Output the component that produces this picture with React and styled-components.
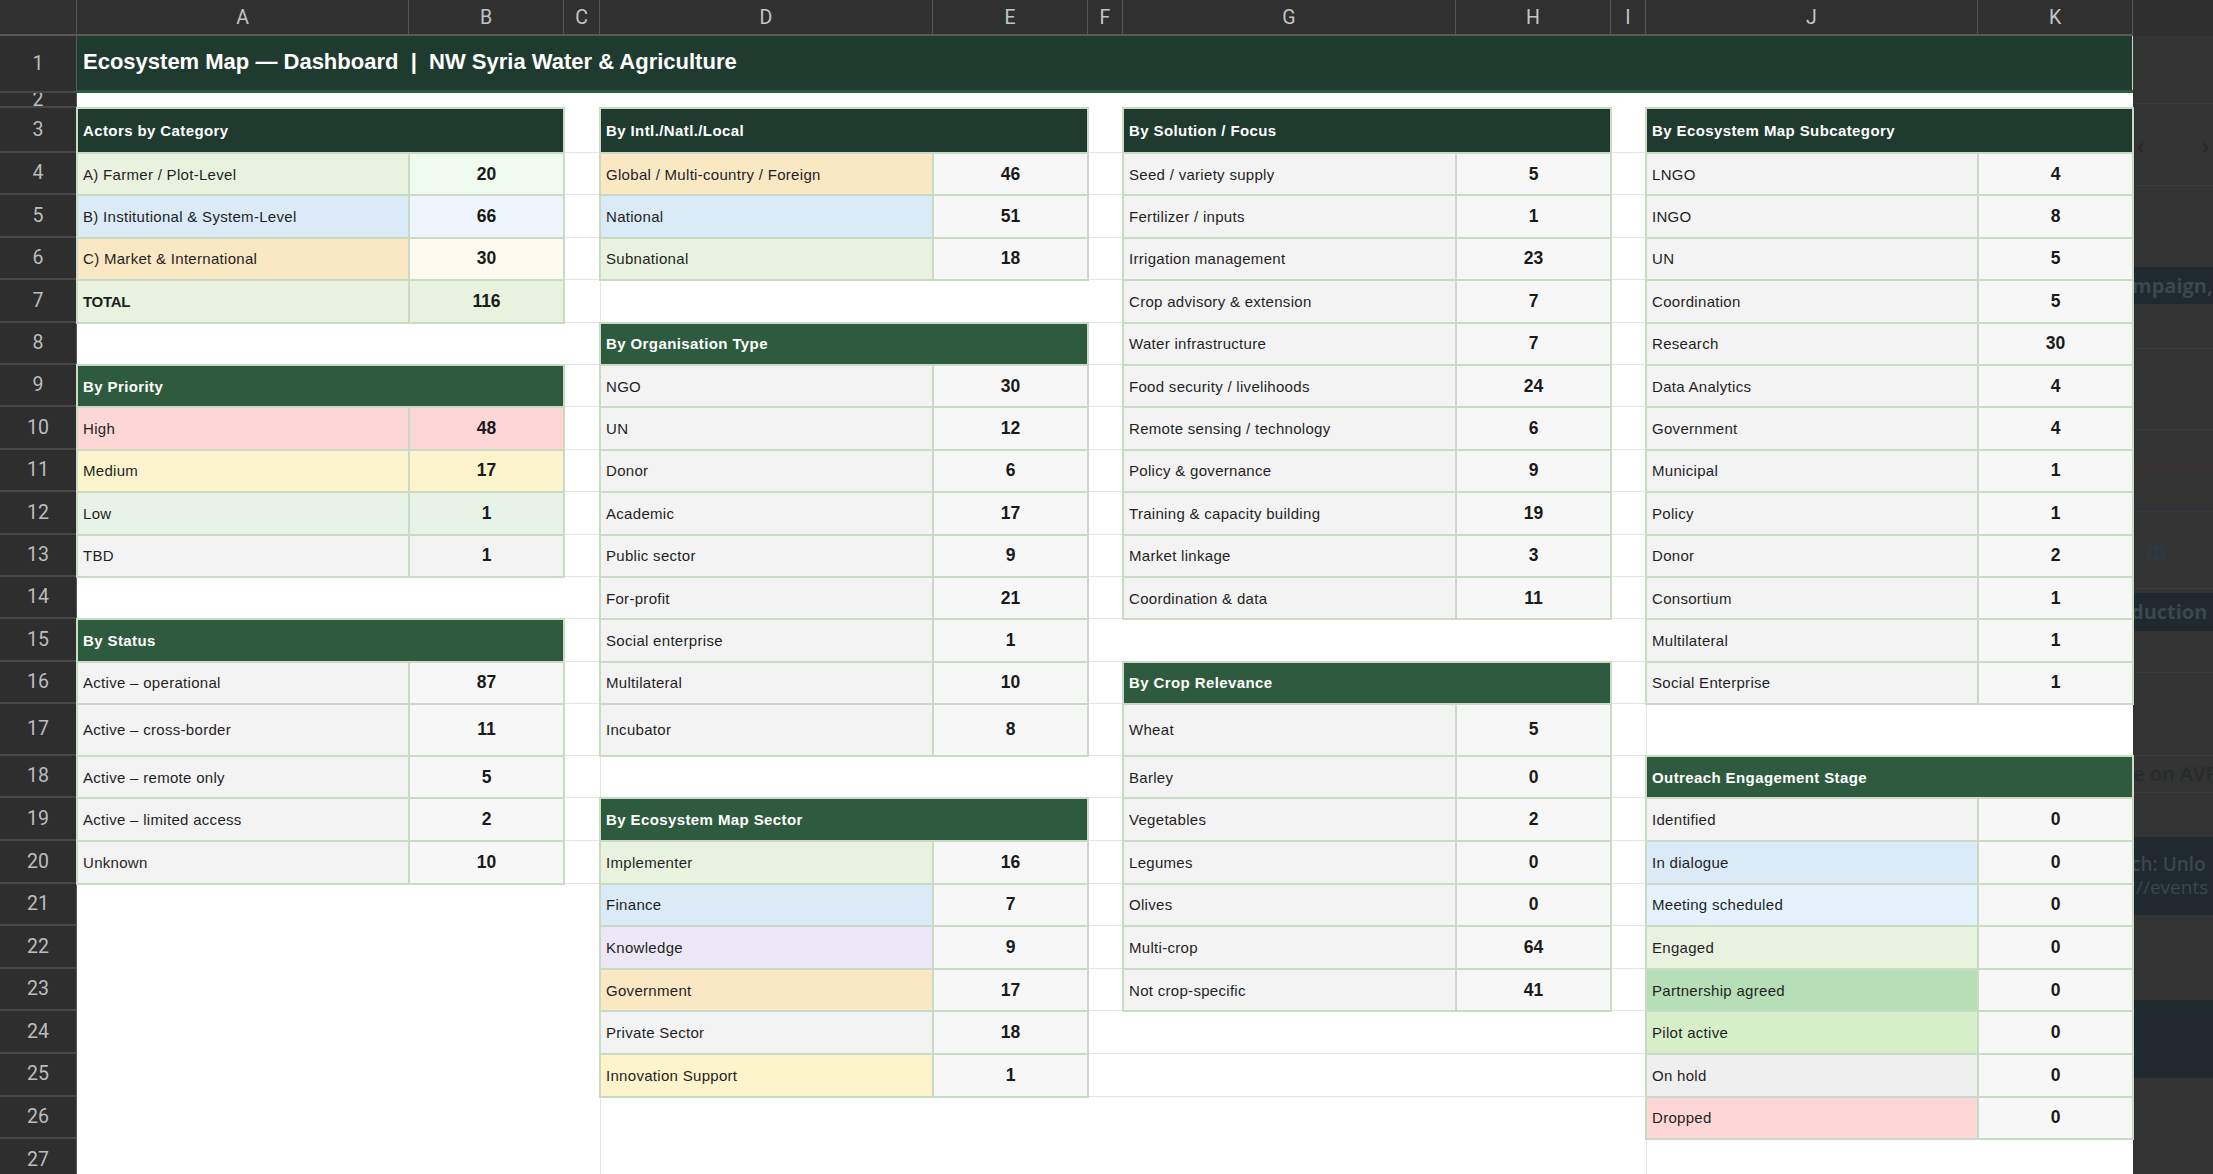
import React from 'react';
import styled, { createGlobalStyle } from 'styled-components';

const COLS = [332, 155, 36, 333, 155, 35, 333, 155, 35, 332, 155];
const LETTERS = 'ABCDEFGHIJK'.split('');
const ROW_H = [57, 15, 45, ...Array(13).fill(42.4), 51.7, ...Array(10).fill(42.6)];
const colIdx = (l) => LETTERS.indexOf(l) + 2;
const rowIdx = (n) => n + 1;

const BORDER = '#c9dac5';
const DARK = '#1f3a2f';
const MID = '#2e5b3e';
const FONT = '"Liberation Sans", Arial, sans-serif';

const GlobalStyle = createGlobalStyle`
  html, body { margin: 0; padding: 0; background: #333; overflow: hidden; }
  #root { width: 2213px; height: 1174px; overflow: hidden; }
`;

const Page = styled.div`
  display: flex;
  width: 2213px;
  height: 1174px;
  overflow: hidden;
  background: #333;
`;

const Sheet = styled.div`
  flex: none;
  display: grid;
  grid-template-columns: 77px ${COLS.map((c) => c + 'px').join(' ')};
  grid-template-rows: 36px ${ROW_H.map((h) => h + 'px').join(' ')};
  background: #fff;
`;

const Corner = styled.div`
  grid-row: 1;
  grid-column: 1;
  background: #303030;
  border-right: 1px solid #555;
  border-bottom: 2px solid #5a5a5a;
`;

const ColHead = styled.div`
  grid-row: 1;
  grid-column: ${(p) => p.$col};
  box-sizing: border-box;
  display: flex;
  align-items: center;
  justify-content: center;
  background: #303030;
  color: #c4c4c4;
  font: 19.5px Roboto, ${FONT};
  border-right: 1px solid #555;
  border-bottom: 2px solid #5a5a5a;
`;

const RowHead = styled.div`
  grid-column: 1;
  grid-row: ${(p) => p.$row};
  box-sizing: border-box;
  display: flex;
  align-items: center;
  justify-content: center;
  overflow: hidden;
  background: #2e2e2e;
  color: #bdbdbd;
  font: 19.5px Roboto, ${FONT};
  line-height: 1;
  border-right: 1px solid #5a5a5a;
  border-bottom: 2px solid #474747;
`;

const Title = styled.div`
  grid-column: 2 / 13;
  grid-row: 2;
  box-sizing: border-box;
  display: flex;
  align-items: center;
  padding: 0 6px 2px;
  background: ${DARK};
  border-bottom: 3px solid ${MID};
  box-shadow: inset -1px 0 0 ${BORDER};
  color: #fff;
  font: bold 22px ${FONT};
  white-space: pre;
`;

const Rule = styled.div`
  grid-column: ${(p) => p.$col};
  grid-row: ${(p) => p.$row};
  box-sizing: border-box;
  border-bottom: ${(p) => (p.$bottom ? '1px solid #e4e4e4' : 'none')};
  border-left: ${(p) => (p.$left ? '1px solid #e4e4e4' : 'none')};
`;

const TableBox = styled.div`
  grid-column: ${(p) => p.$col} / span 2;
  grid-row: ${(p) => p.$row} / span ${(p) => p.$span};
  display: grid;
  grid-template-columns: subgrid;
  grid-template-rows: subgrid;
  outline: 1px solid ${BORDER};
  z-index: 1;
`;

const HeadCell = styled.div`
  grid-column: span 2;
  display: flex;
  align-items: center;
  padding: 0 6px;
  background: ${(p) => p.$bg};
  box-shadow: inset 0 0 0 1px ${BORDER};
  color: #fff;
  font: bold 15px ${FONT};
  letter-spacing: 0.4px;
  white-space: nowrap;
`;

const LabelCell = styled.div`
  display: flex;
  align-items: center;
  padding: 0 6px;
  overflow: hidden;
  background: ${(p) => p.$bg};
  box-shadow: inset 0 0 0 1px ${BORDER};
  color: #1f1f1f;
  font: ${(p) => (p.$strong ? 'bold' : 'normal')} 15px ${FONT};
  letter-spacing: ${(p) => (p.$strong ? '-0.3px' : '0.3px')};
  white-space: nowrap;
`;

const ValueCell = styled.div`
  display: flex;
  align-items: center;
  justify-content: center;
  background: ${(p) => p.$bg};
  box-shadow: inset 0 0 0 1px ${BORDER};
  color: #1a1a1a;
  font: bold 17.5px ${FONT};
`;

/* ---------- dimmed side panel ---------- */
const Side = styled.div`
  flex: 1;
  display: flex;
  flex-direction: column;
  overflow: hidden;
  background: #333;
`;

const Seg = styled.div`
  flex: none;
  box-sizing: border-box;
  height: ${(p) => p.$h}px;
  display: flex;
  flex-direction: column;
  justify-content: center;
  gap: ${(p) => p.$gap || 0}px;
  align-items: ${(p) => (p.$spread ? 'stretch' : 'flex-start')};
  background: ${(p) => p.$bg || 'transparent'};
  border-bottom: ${(p) => (p.$line ? `1px solid ${p.$line}` : 'none')};
  overflow: hidden;
  white-space: nowrap;
`;

const Chevrons = styled.div`
  display: flex;
  justify-content: space-between;
  padding: 0 4px;
  color: #262626;
  font: 24px "Open Sans", sans-serif;
`;

const DimText = styled.div`
  color: ${(p) => p.$color || '#3a474f'};
  font: ${(p) => p.$weight || 700} ${(p) => p.$size || 20}px "Open Sans", sans-serif;
  line-height: 1;
  margin-left: ${(p) => p.$shift || 0}px;
  text-decoration: ${(p) => (p.$under ? 'underline' : 'none')};
`;

const TABLES = [
  {
    title: 'Actors by Category', col: 'A', row: 3, dark: true,
    items: [
      ['A) Farmer / Plot-Level', 20, '#e9f2df', '#f0fbef'],
      ['B) Institutional & System-Level', 66, '#dbeaf7', '#eef5fd'],
      ['C) Market & International', 30, '#fae7c4', '#fefaef'],
      ['TOTAL', 116, '#e9f2df', '#e9f2df', true],
    ],
  },
  {
    title: 'By Priority', col: 'A', row: 9,
    items: [
      ['High', 48, '#fdd6d6', '#fdd6d6'],
      ['Medium', 17, '#fdf3cc', '#fdf3cc'],
      ['Low', 1, '#e8f3e7', '#e8f3e7'],
      ['TBD', 1, '#f3f3f3', '#f3f3f3'],
    ],
  },
  {
    title: 'By Status', col: 'A', row: 15,
    items: [
      ['Active – operational', 87],
      ['Active – cross-border', 11],
      ['Active – remote only', 5],
      ['Active – limited access', 2],
      ['Unknown', 10],
    ],
  },
  {
    title: 'By Intl./Natl./Local', col: 'D', row: 3, dark: true,
    items: [
      ['Global / Multi-country / Foreign', 46, '#fae7c4'],
      ['National', 51, '#dbeaf7'],
      ['Subnational', 18, '#e9f2df'],
    ],
  },
  {
    title: 'By Organisation Type', col: 'D', row: 8,
    items: [
      ['NGO', 30], ['UN', 12], ['Donor', 6], ['Academic', 17], ['Public sector', 9],
      ['For-profit', 21], ['Social enterprise', 1], ['Multilateral', 10], ['Incubator', 8],
    ],
  },
  {
    title: 'By Ecosystem Map Sector', col: 'D', row: 19,
    items: [
      ['Implementer', 16, '#e9f2df'],
      ['Finance', 7, '#dbeaf7'],
      ['Knowledge', 9, '#ebe7f6'],
      ['Government', 17, '#fae7c4'],
      ['Private Sector', 18, '#f3f3f3'],
      ['Innovation Support', 1, '#fdf4cc'],
    ],
  },
  {
    title: 'By Solution / Focus', col: 'G', row: 3, dark: true,
    items: [
      ['Seed / variety supply', 5], ['Fertilizer / inputs', 1], ['Irrigation management', 23],
      ['Crop advisory & extension', 7], ['Water infrastructure', 7], ['Food security / livelihoods', 24],
      ['Remote sensing / technology', 6], ['Policy & governance', 9], ['Training & capacity building', 19],
      ['Market linkage', 3], ['Coordination & data', 11],
    ],
  },
  {
    title: 'By Crop Relevance', col: 'G', row: 16,
    items: [
      ['Wheat', 5], ['Barley', 0], ['Vegetables', 2], ['Legumes', 0], ['Olives', 0],
      ['Multi-crop', 64], ['Not crop-specific', 41],
    ],
  },
  {
    title: 'By Ecosystem Map Subcategory', col: 'J', row: 3, dark: true,
    items: [
      ['LNGO', 4], ['INGO', 8], ['UN', 5], ['Coordination', 5], ['Research', 30],
      ['Data Analytics', 4], ['Government', 4], ['Municipal', 1], ['Policy', 1], ['Donor', 2],
      ['Consortium', 1], ['Multilateral', 1], ['Social Enterprise', 1],
    ],
  },
  {
    title: 'Outreach Engagement Stage', col: 'J', row: 18,
    items: [
      ['Identified', 0, '#f3f3f3'],
      ['In dialogue', 0, '#dbeaf7'],
      ['Meeting scheduled', 0, '#e3f2fd'],
      ['Engaged', 0, '#e9f2df'],
      ['Partnership agreed', 0, '#b6dfb7'],
      ['Pilot active', 0, '#d6efc8'],
      ['On hold', 0, '#efefef'],
      ['Dropped', 0, '#fdd6d6'],
    ],
  },
];

const RULES = [];
const addBottom = (col, from, to) => {
  for (let r = from; r <= to; r++) RULES.push({ col, row: r, bottom: true });
};
addBottom('C', 3, 20);
addBottom('F', 3, 25);
addBottom('I', 3, 25);
addBottom('G', 24, 25);
addBottom('H', 24, 25);
[7, 18, 26, 27].forEach((r) => RULES.push({ col: 'D', row: r, left: true }));
[17, 27].forEach((r) => RULES.push({ col: 'J', row: r, left: true }));

function Table({ t }) {
  return (
    <TableBox $col={colIdx(t.col)} $row={rowIdx(t.row)} $span={t.items.length + 1}>
      <HeadCell $bg={t.dark ? DARK : MID}>{t.title}</HeadCell>
      {t.items.map(([label, value, lb, vb, strong]) => (
        <React.Fragment key={label}>
          <LabelCell $bg={lb || '#f3f3f3'} $strong={strong}>{label}</LabelCell>
          <ValueCell $bg={vb || '#f7f7f7'}>{value}</ValueCell>
        </React.Fragment>
      ))}
    </TableBox>
  );
}

function SidePanel() {
  return (
    <Side>
      <Seg $h={36} $bg="#2f2f2f" />
      <Seg $h={68} $line="#3a3a3a" />
      <Seg $h={82} $line="#3a3a3a" $spread>
        <Chevrons><span>‹</span><span>›</span></Chevrons>
      </Seg>
      <Seg $h={81} />
      <Seg $h={37} $bg="#1f292e">
        <DimText $shift={-1}>mpaign,</DimText>
      </Seg>
      <Seg $h={45} $line="#3a3a3a" />
      <Seg $h={81} $line="#3a3a3a" />
      <Seg $h={37} $line="#4a2c2c" />
      <Seg $h={45} $line="#2c3b47" />
      <Seg $h={77} $line="#3a3a3a">
        <DimText $color="#2a3a45" $weight={600} $under $shift={14}>m</DimText>
      </Seg>
      <Seg $h={4} />
      <Seg $h={38} $bg="#1f292e">
        <DimText $shift={-2}>duction |</DimText>
      </Seg>
      <Seg $h={42} $line="#3a3a3a" />
      <Seg $h={83} $line="#3a3a3a" />
      <Seg $h={37} $line="#3a3a3a">
        <DimText $color="#262b2e" $weight={600}>e on AVF</DimText>
      </Seg>
      <Seg $h={44} />
      <Seg $h={78} $bg="#1f292e" $gap={4}>
        <DimText $weight={600} $size={19} $shift={-2}>ch: Unlo</DimText>
        <DimText $weight={400} $size={19} $shift={-2}>://events</DimText>
      </Seg>
      <Seg $h={85} />
      <Seg $h={78} $bg="#1f292e" />
    </Side>
  );
}

export default function App() {
  return (
    <>
      <GlobalStyle />
      <Page>
        <Sheet>
          <Corner />
          {LETTERS.map((l, i) => (
            <ColHead key={l} $col={i + 2}>{l}</ColHead>
          ))}
          {ROW_H.map((_, i) => (
            <RowHead key={i} $row={i + 2}>{i + 1}</RowHead>
          ))}
          <Title>{'Ecosystem Map — Dashboard  |  NW Syria Water & Agriculture'}</Title>
          {RULES.map((r, i) => (
            <Rule key={i} $col={colIdx(r.col)} $row={rowIdx(r.row)} $bottom={r.bottom} $left={r.left} />
          ))}
          {TABLES.map((t) => (
            <Table key={t.title} t={t} />
          ))}
        </Sheet>
        <SidePanel />
      </Page>
    </>
  );
}
